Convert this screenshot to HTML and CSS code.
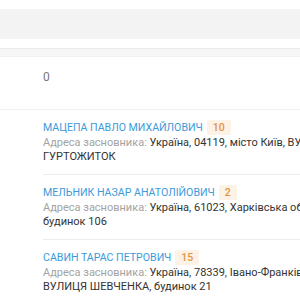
FILE: index.html
```html
<!DOCTYPE html>
<html lang="uk">
<head>
    <meta charset="UTF-8">
    <meta name="viewport" content="width=device-width, initial-scale=1.0">
    <title>Засновники</title>
    <link rel="stylesheet" href="styles.css">
</head>
<body>
    <div class="page">
        <div class="toolbar"></div>
        <div class="tabs-line"></div>
        <div class="total">0</div>

        <ul class="founders">
            <li class="founder">
                <div class="founder-name">
                    <a href="#">МАЦЕПА ПАВЛО МИХАЙЛОВИЧ</a>
                    <span class="badge">10</span>
                </div>
                <div class="founder-address">
                    <span class="label">Адреса засновника:</span>
                    Україна, 04119, місто Київ, ВУЛИЦЯ ЗООЛОГІЧНА, будинок 4А, ГУРТОЖИТОК
                </div>
            </li>
            <li class="founder">
                <div class="founder-name">
                    <a href="#">МЕЛЬНИК НАЗАР АНАТОЛІЙОВИЧ</a>
                    <span class="badge">2</span>
                </div>
                <div class="founder-address">
                    <span class="label">Адреса засновника:</span>
                    Україна, 61023, Харківська обл., місто Харків, ВУЛИЦЯ СУМСЬКА, будинок 106
                </div>
            </li>
            <li class="founder">
                <div class="founder-name">
                    <a href="#">САВИН ТАРАС ПЕТРОВИЧ</a>
                    <span class="badge">15</span>
                </div>
                <div class="founder-address">
                    <span class="label">Адреса засновника:</span>
                    Україна, 78339, Івано-Франківська обл., Тлумацький р-н, с. Живачів, ВУЛИЦЯ ШЕВЧЕНКА, будинок 21
                </div>
            </li>
        </ul>
    </div>
</body>
</html>
```

FILE: styles.css
```css
html, body {
    margin: 0;
    overflow: hidden;
}
body {
    font-family: Roboto, "Liberation Sans", Arial, sans-serif;
    font-size: 11px;
    color: #333;
    background-color: #fff;
}
.page {
    width: 700px;
    padding-top: 9px;
}
.toolbar {
    height: 30px;
    background-color: #f3f3f3;
}
.tabs-line {
    height: 7px;
    margin-top: 9px;
    background-color: #f6f6f6;
    border-top: 1px solid #ebebeb;
    border-bottom: 1px solid #f1f1f1;
}
.total {
    padding: 13px 43px 0;
    height: 39px;
    font-size: 12px;
    color: #777;
    border-bottom: 1px solid #f1f1f1;
}
.founders {
    list-style: none;
    margin: 0;
    padding: 0 0 0 43px;
}
.founder {
    width: 465px;
    padding: 10px 0 11px;
    border-bottom: 1px solid #ececec;
}
.founder-name {
    display: flex;
    align-items: center;
    gap: 4px;
    height: 15px;
    margin-bottom: 1px;
    font-size: 10.6px;
}
.founder-name a {
    color: #3d9ad9;
    text-decoration: none;
}
.badge {
    padding: 1px 6px;
    line-height: 13px;
    background-color: #fcf2e5;
    color: #e39245;
    font-size: 10.5px;
    font-weight: 500;
    border-radius: 2px;
}
.founder-address {
    line-height: 13.5px;
}
.label {
    color: #a3a3a3;
}
```
